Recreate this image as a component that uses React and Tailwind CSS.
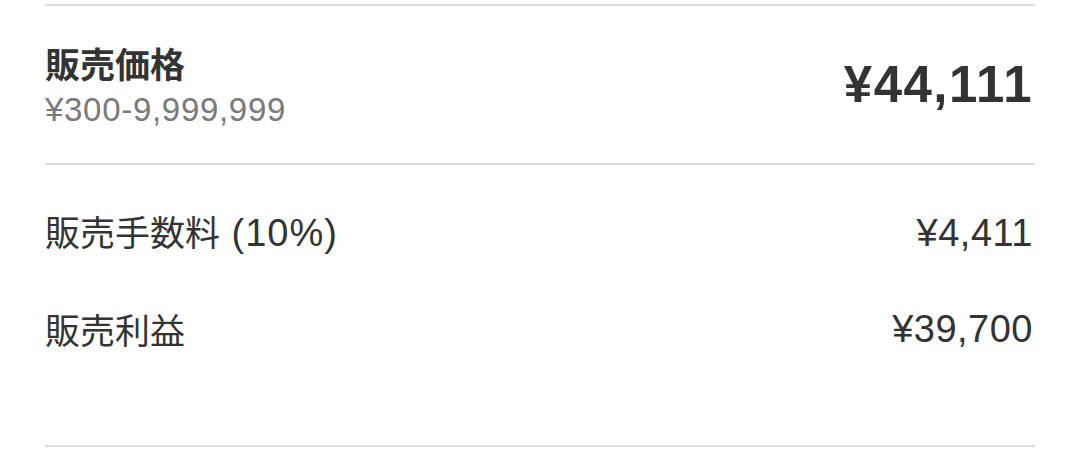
export default function App() {
  const cjk = { fontFamily: '"Noto Sans CJK JP", sans-serif' };
  const lat = { fontFamily: '"Liberation Sans", Arial, "Noto Sans CJK JP", sans-serif' };
  return (
    <div className="w-[1080px] h-[451px] bg-white px-[45px] pt-[4px] text-[#333333]" style={cjk}>
      <div className="h-[2px] bg-[#dddddd]" />
      <div className="h-[157px] flex items-center justify-between">
        <div className="flex flex-col">
          <div className="text-[35px] leading-[44px] font-bold">販売価格</div>
          <div className="text-[33px] leading-[38px] tracking-[0.7px] text-[#7a7a7a] mt-[6px]" style={lat}>¥300-9,999,999</div>
        </div>
        <div className="text-[51px] leading-[60px] font-bold tracking-[1.5px] pr-[2px]" style={lat}>¥44,111</div>
      </div>
      <div className="h-[2px] bg-[#dddddd]" />
      <div className="flex flex-col pt-[44px]">
        <div className="flex items-center justify-between h-[48px]">
          <span className="text-[35px]">
            販売手数料<span className="text-[38px] tracking-[1px]" style={lat}> (10%)</span>
          </span>
          <span className="text-[38px] tracking-[0.5px] pr-[2px]" style={lat}>¥4,411</span>
        </div>
        <div className="flex items-center justify-between h-[48px] mt-[48px]">
          <span className="text-[35px]">販売利益</span>
          <span className="text-[38px] tracking-[0.5px] pr-[2px]" style={lat}>¥39,700</span>
        </div>
      </div>
      <div className="h-[2px] bg-[#dddddd] mt-[92px]" />
    </div>
  );
}
